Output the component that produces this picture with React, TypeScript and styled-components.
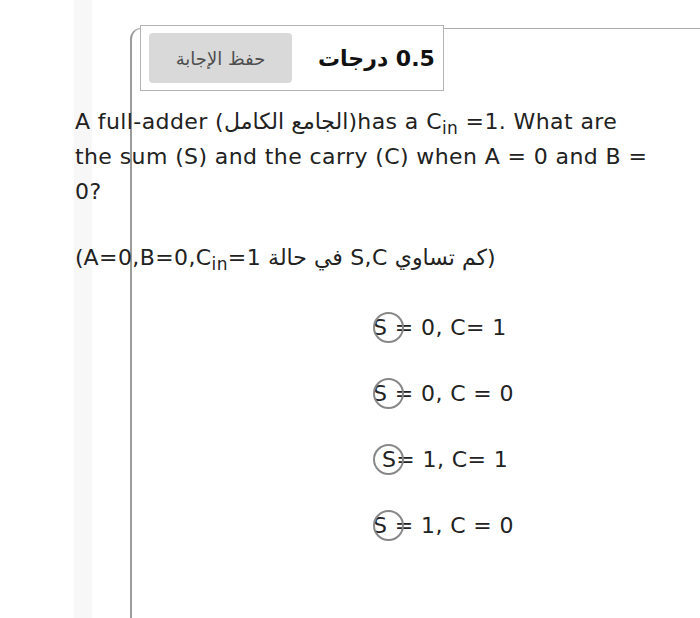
import styled, { createGlobalStyle } from "styled-components";

/*--------------------------
    Global
--------------------------*/
const GlobalReset = createGlobalStyle`
    html, body {
        margin: 0;
        padding: 0;
        background: #fff;
    }
    body {
        font-family: "DejaVu Sans", Verdana, sans-serif;
        color: #222;
    }
`;

/*--------------------------
    Styled
--------------------------*/
const Page = styled.div`
    width: 700px;
    height: 618px;
    overflow: hidden;
    background: linear-gradient(
        to right,
        #fff 0,
        #fff 74px,
        #f7f7f7 74px,
        #f7f7f7 92px,
        #fff 92px
    );
`;
const Card = styled.div`
    box-sizing: border-box;
    margin: 28px 0 0 130px;
    min-height: 590px;
    border-left: 2px solid #9c9c9c;
    border-top: 1.5px solid #ababab;
    border-top-left-radius: 11px;
`;
const Header = styled.div`
    display: inline-flex;
    direction: rtl;
    box-sizing: border-box;
    margin: -4px 0 0 8px;
    height: 66px;
    padding: 0 8px 0 8px;
    align-items: center;
    gap: 26px;
    border: 1.5px solid #b3b3b3;
    background: #fff;
`;
const Grade = styled.div`
    color: #111;
    font-size: 22px;
    font-weight: bold;
    white-space: nowrap;
`;
const SaveButton = styled.button`
    width: 143px;
    height: 50px;
    border: none;
    border-radius: 4px;
    background: #d9d9d9;
    color: #4e4e4e;
    font-family: "DejaVu Sans", sans-serif;
    font-size: 18px;
    direction: rtl;
`;
const Question = styled.div`
    width: 582px;
    margin: 13px 0 0 -57px;
    font-size: 22px;
    line-height: 35px;
    letter-spacing: 0.4px;
`;
const QuestionText = styled.p`
    margin: 0;
`;
const HintText = styled.p`
    margin: 31px 0 0 0;
    direction: rtl;
    text-align: left;
`;
const Sub = styled.sub`
    font-size: 17px;
    vertical-align: -5px;
    line-height: 0;
`;
const Options = styled.div`
    display: flex;
    flex-direction: column;
    margin: 35px 0 0 241px;
    gap: 31px;
`;
const Option = styled.label<{ $indent?: number }>`
    position: relative;
    display: block;
    height: 35px;
    padding-left: ${(p) => p.$indent ?? 0}px;
    font-size: 22px;
    line-height: 35px;
    letter-spacing: 0.4px;
    color: #222;
    white-space: pre;
`;
const Radio = styled.span`
    position: absolute;
    left: 0;
    top: 50%;
    box-sizing: border-box;
    width: 31px;
    height: 31px;
    margin-top: -16px;
    border: 2px solid #888;
    border-radius: 50%;
`;

/*--------------------------
    Main
--------------------------*/
const options = [
    { text: "S = 0, C= 1", indent: 0 },
    { text: "S = 0, C = 0", indent: 0 },
    { text: "S= 1, C= 1", indent: 9 },
    { text: "S = 1, C = 0", indent: 0 },
];

const App = () => {
    return (
        <Page>
            <GlobalReset />
            <Card>
                <Header>
                    <Grade>0.5 درجات</Grade>
                    <SaveButton>حفظ الإجابة</SaveButton>
                </Header>
                <Question>
                    <QuestionText>
                        A full-adder (الجامع الكامل)has a C<Sub>in</Sub> =1. What are the sum (S) and the
                        carry (C) when A = 0 and B = 0?
                    </QuestionText>
                    <HintText>
                        (كم تساوي S,C في حالة <span dir="ltr">A=0,B=0,C<Sub>in</Sub>=1</span>)
                    </HintText>
                </Question>
                <Options>
                    {options.map((o) => (
                        <Option key={o.text} $indent={o.indent}>
                            <Radio />
                            {o.text}
                        </Option>
                    ))}
                </Options>
            </Card>
        </Page>
    );
};

export default App;
